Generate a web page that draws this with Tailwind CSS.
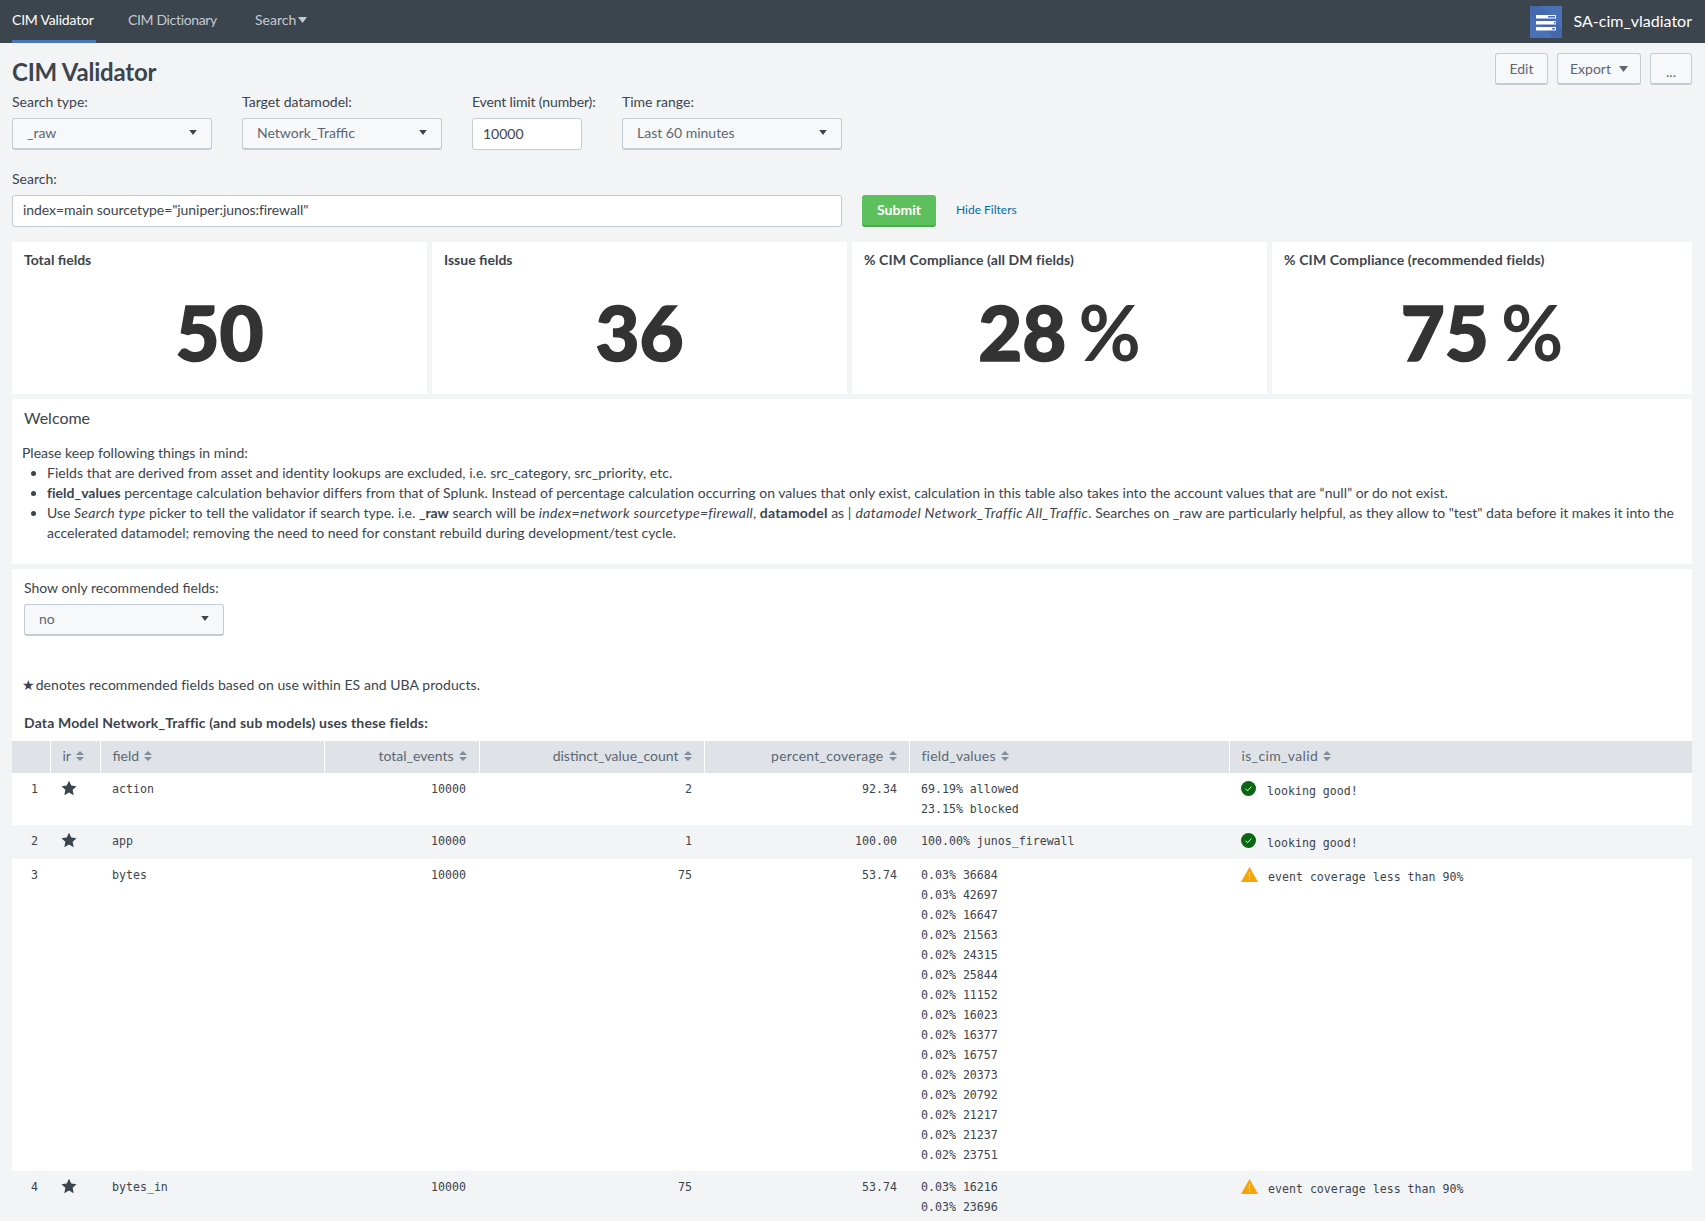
<!DOCTYPE html>
<html lang="en">
<head>
    <meta charset="UTF-8">
    <title>CIM Validator</title>
    <script src="https://cdn.jsdelivr.net/npm/@tailwindcss/browser@4"></script>
</head>
<body class="bg-[#f2f4f5] text-[#3c444d] font-['Lato','Liberation_Sans',sans-serif] text-[14px] leading-5 h-screen overflow-hidden">

<!-- Navigation Bar -->
<nav class="bg-[#3c444d] h-[43px] flex justify-between items-center pl-3 pr-[13px] text-[14px]">
    <ul class="flex h-full items-center whitespace-nowrap">
        <li class="h-full flex items-center border-b-[3px] border-[#4a78c0] text-white w-[84px] tracking-[-0.2px]">CIM Validator</li>
        <li class="ml-[32px] mb-[3px] text-[#c3cbd4] w-[90px] tracking-[-0.35px]">CIM Dictionary</li>
        <li class="ml-[37px] mb-[3px] text-[#c3cbd4] flex items-center gap-[2px]">Search
            <svg class="w-[9px] h-[6px]" viewBox="0 0 9 6"><path d="M0 0h9L4.5 6z" fill="#c3cbd4"/></svg>
        </li>
    </ul>
    <div class="flex items-center gap-3 text-white text-[16px]">
        <svg class="w-[32px] h-[32px]" viewBox="0 0 32 32">
            <rect width="32" height="32" fill="#4a70b8"/>
            <path d="M0 0h10l22 22v10H24L0 8z" fill="#4467ad"/>
            <rect x="6" y="9" width="20" height="3.5" fill="#fff"/>
            <rect x="18" y="10" width="7" height="1.5" fill="#4a70b8"/>
            <rect x="6" y="15" width="20" height="3.5" fill="#fff"/>
            <rect x="24" y="16" width="1.5" height="1.5" fill="#4a70b8"/>
            <rect x="6" y="21" width="20" height="3.5" fill="#fff"/>
            <rect x="22" y="22" width="3" height="1.5" fill="#4a70b8"/>
        </svg>
        <span class="mb-[2px]">SA-cim_vladiator</span>
    </div>
</nav>

<main class="pl-3 pr-[13px]">
    <!-- Title row -->
    <div class="flex justify-between items-start h-[43px]">
        <h1 class="mt-[15px] text-[24px] leading-7 font-bold tracking-[-0.2px]">CIM Validator</h1>
        <div class="flex gap-[9px] mt-[10px] text-[#5c6773]">
            <div class="w-[53px] h-[32px] flex items-center justify-center bg-[#f7f8fa] border border-[#c3cbd4] border-b-2 rounded-[3px]">Edit</div>
            <div class="w-[84px] h-[32px] flex items-center justify-center gap-2 bg-[#f7f8fa] border border-[#c3cbd4] border-b-2 rounded-[3px]">Export
                <svg class="w-[9px] h-[6px]" viewBox="0 0 9 6"><path d="M0 0h9L4.5 6z" fill="#5c6773"/></svg>
            </div>
            <div class="w-[42px] h-[32px] flex items-center justify-center pt-[6px] bg-[#f7f8fa] border border-[#c3cbd4] border-b-2 rounded-[3px]">...</div>
        </div>
    </div>

    <!-- Filters -->
    <div class="flex pt-[6px]">
        <div class="w-[200px] mr-[30px]">
            <label class="block mb-[6px]">Search type:</label>
            <div class="h-[32px] flex justify-between items-center px-[14px] pb-[2px] bg-[#f7f8fa] border border-[#c3cbd4] border-b-2 rounded-[3px] text-[#5c6773]">_raw
                <svg class="w-[8px] h-[5px]" viewBox="0 0 9 6"><path d="M0 0h9L4.5 6z" fill="#3c444d"/></svg>
            </div>
        </div>
        <div class="w-[200px] mr-[30px]">
            <label class="block mb-[6px]">Target datamodel:</label>
            <div class="h-[32px] flex justify-between items-center px-[14px] pb-[2px] bg-[#f7f8fa] border border-[#c3cbd4] border-b-2 rounded-[3px] text-[#5c6773]">Network_Traffic
                <svg class="w-[8px] h-[5px]" viewBox="0 0 9 6"><path d="M0 0h9L4.5 6z" fill="#3c444d"/></svg>
            </div>
        </div>
        <div class="w-[110px] mr-[40px]">
            <label class="block mb-[6px] whitespace-nowrap tracking-[-0.15px]">Event limit (number):</label>
            <input type="text" value="10000" class="w-full h-[32px] px-[10px] pb-[2px] bg-white border border-[#c3cbd4] rounded-[3px] text-[#3c444d]">
        </div>
        <div class="w-[220px]">
            <label class="block mb-[6px]">Time range:</label>
            <div class="h-[32px] flex justify-between items-center px-[14px] pb-[2px] bg-[#f7f8fa] border border-[#c3cbd4] border-b-2 rounded-[3px] text-[#5c6773]">Last 60 minutes
                <svg class="w-[8px] h-[5px]" viewBox="0 0 9 6"><path d="M0 0h9L4.5 6z" fill="#3c444d"/></svg>
            </div>
        </div>
    </div>
    <div class="mt-[19px]">
        <label class="block mb-[6px]">Search:</label>
        <div class="flex items-center">
            <input type="text" value='index=main sourcetype="juniper:junos:firewall"' class="w-[830px] h-[32px] px-[10px] pb-[3px] bg-white border border-[#c3cbd4] rounded-[3px] text-[#3c444d] tracking-[-0.07px]">
            <button class="ml-5 w-[74px] h-[32px] bg-[#5cc05c] border-b-2 border-[#4fa84f] rounded-[3px] text-white font-bold">Submit</button>
            <a href="#" class="ml-5 mb-[2px] text-[12px] text-[#006eaa]">Hide Filters</a>
        </div>
    </div>

    <!-- Single values -->
    <div class="flex gap-[5px] mt-[15px]">
        <div class="bg-white w-[415px] h-[152px] px-3 pt-2">
            <h3 class="font-bold">Total fields</h3>
            <div class="text-center text-[#333] text-[76px] leading-[74px] font-black mt-[25px] [-webkit-text-stroke:1.5px_#333]">50</div>
        </div>
        <div class="bg-white w-[415px] h-[152px] px-3 pt-2">
            <h3 class="font-bold">Issue fields</h3>
            <div class="text-center text-[#333] text-[76px] leading-[74px] font-black mt-[25px] [-webkit-text-stroke:1.5px_#333]">36</div>
        </div>
        <div class="bg-white w-[415px] h-[152px] px-3 pt-2">
            <h3 class="font-bold tracking-[0.1px]">% CIM Compliance (all DM fields)</h3>
            <div class="text-center text-[#333] text-[76px] leading-[74px] font-black mt-[25px] [-webkit-text-stroke:1.5px_#333]">28 <span class="font-bold ml-[-6px] [-webkit-text-stroke:0]">%</span></div>
        </div>
        <div class="bg-white w-[420px] h-[152px] px-3 pt-2">
            <h3 class="font-bold tracking-[0.15px]">% CIM Compliance (recommended fields)</h3>
            <div class="text-center text-[#333] text-[76px] leading-[74px] font-black mt-[25px] [-webkit-text-stroke:1.5px_#333]">75 <span class="font-bold ml-[-6px] [-webkit-text-stroke:0]">%</span></div>
        </div>
    </div>

    <!-- Welcome -->
    <div class="bg-white mt-[5px] h-[165px] pl-[10px] pr-3 pt-[9px]">
        <h2 class="ml-[2px] text-[16px]">Welcome</h2>
        <p class="mt-[15px]">Please keep following things in mind:</p>
        <ul class="list-disc pl-[25px]">
            <li class="tracking-[0.03px]">Fields that are derived from asset and identity lookups are excluded, i.e. src_category, src_priority, etc.</li>
            <li class="tracking-[0.02px]"><b>field_values</b> percentage calculation behavior differs from that of Splunk. Instead of percentage calculation occurring on values that only exist, calculation in this table also takes into the account values that are “null” or do not exist.</li>
            <li>Use <i class="tracking-[0.3px]">Search type</i> picker to tell the validator if search type. i.e. <b>_raw</b> search will be <i class="tracking-[0.3px]">index=network sourcetype=firewall</i>, <b class="tracking-[0.2px]">datamodel</b> as <i class="tracking-[0.38px]">| datamodel Network_Traffic All_Traffic</i>. Searches on _raw are particularly helpful, as they allow to "test" data before it makes it into the accelerated datamodel; removing the need to need for constant rebuild during development/test cycle.</li>
        </ul>
    </div>

    <!-- Table panel -->
    <div class="bg-white mt-[5px]">
        <div class="px-3 pt-[9px]">
            <label class="block mb-[6px]">Show only recommended fields:</label>
            <div class="w-[200px] h-[32px] flex justify-between items-center px-[14px] pb-[2px] bg-[#f7f8fa] border border-[#c3cbd4] border-b-2 rounded-[3px] text-[#5c6773]">no
                <svg class="w-[8px] h-[5px]" viewBox="0 0 9 6"><path d="M0 0h9L4.5 6z" fill="#3c444d"/></svg>
            </div>
        </div>
        <p class="pl-[10px] mt-[39px] tracking-[0.05px]"><span class="mr-[-3px]">★</span> denotes recommended fields based on use within ES and UBA products.</p>
        <h3 class="px-3 mt-[18px] font-bold tracking-[0.16px]">Data Model Network_Traffic (and sub models) uses these fields:</h3>

        <table class="mt-[8px] w-full table-fixed border-collapse font-['DejaVu_Sans_Mono',monospace] text-[11.6px]">
            <colgroup>
                <col class="w-[38px]"><col class="w-[50px]"><col class="w-[224px]"><col class="w-[155px]"><col class="w-[225px]"><col class="w-[205px]"><col class="w-[320px]"><col>
            </colgroup>
            <thead>
                <tr class="bg-[#dfe3e8] h-[32px] font-['Lato',sans-serif] text-[14px] text-[#5c6773]">
                    <th class="border-r border-white"></th>
                    <th class="border-r border-white font-normal text-left pl-3 pb-[2px]"><span class="inline-flex items-center gap-[5px]">ir <svg class="w-[8px] h-[10px]" viewBox="0 0 8 10"><path d="M4 0l4 4H0zM4 10L0 6h8z" fill="#818d99"/></svg></span></th>
                    <th class="border-r border-white font-normal text-left pl-3 pb-[2px]"><span class="inline-flex items-center gap-[5px]">field <svg class="w-[8px] h-[10px]" viewBox="0 0 8 10"><path d="M4 0l4 4H0zM4 10L0 6h8z" fill="#818d99"/></svg></span></th>
                    <th class="border-r border-white font-normal text-right pr-3 pb-[2px]"><span class="inline-flex items-center gap-[5px]">total_events <svg class="w-[8px] h-[10px]" viewBox="0 0 8 10"><path d="M4 0l4 4H0zM4 10L0 6h8z" fill="#818d99"/></svg></span></th>
                    <th class="border-r border-white font-normal text-right pr-3 pb-[2px]"><span class="inline-flex items-center gap-[5px]">distinct_value_count <svg class="w-[8px] h-[10px]" viewBox="0 0 8 10"><path d="M4 0l4 4H0zM4 10L0 6h8z" fill="#818d99"/></svg></span></th>
                    <th class="border-r border-white font-normal text-right pr-3 pb-[2px]"><span class="inline-flex items-center gap-[5px] tracking-[0.25px]">percent_coverage <svg class="w-[8px] h-[10px]" viewBox="0 0 8 10"><path d="M4 0l4 4H0zM4 10L0 6h8z" fill="#818d99"/></svg></span></th>
                    <th class="border-r border-white font-normal text-left pl-3 pb-[2px]"><span class="inline-flex items-center gap-[5px] tracking-[0.2px]">field_values <svg class="w-[8px] h-[10px]" viewBox="0 0 8 10"><path d="M4 0l4 4H0zM4 10L0 6h8z" fill="#818d99"/></svg></span></th>
                    <th class="font-normal text-left pl-3 pb-[2px]"><span class="inline-flex items-center gap-[5px] tracking-[0.35px]">is_cim_valid <svg class="w-[8px] h-[10px]" viewBox="0 0 8 10"><path d="M4 0l4 4H0zM4 10L0 6h8z" fill="#818d99"/></svg></span></th>
                </tr>
            </thead>
            <tbody class="align-top">
                <tr>
                    <td class="pt-[6px] pb-[8px] text-right pr-3">1</td>
                    <td class="pt-[7px] pl-[11px]"><svg class="w-[16px] h-[16px]" viewBox="0 0 24 24"><path d="M12 1l3.4 7.3 7.9 1-5.8 5.5 1.5 7.9L12 18.8l-7 3.9 1.5-7.9L.7 9.3l7.9-1z" fill="#3c444d"/></svg></td>
                    <td class="pt-[6px] pl-3">action</td>
                    <td class="pt-[6px] pr-[13px] text-right">10000</td>
                    <td class="pt-[6px] pr-3 text-right">2</td>
                    <td class="pt-[6px] pr-3 text-right">92.34</td>
                    <td class="pt-[6px] pb-[6px] pl-3">69.19% allowed<br>23.15% blocked</td>
                    <td class="pt-[8px] pl-3"><div class="flex items-start gap-[11px]">
                        <svg class="w-[15px] h-[15px]" viewBox="0 0 16 16"><circle cx="8" cy="8" r="8" fill="#0a6612"/><path d="M4.8 8.2l2.2 2.2 4-4.4" fill="none" stroke="#fff" stroke-width="1"/></svg>
                        <span>looking good!</span></div></td>
                </tr>
                <tr class="bg-[#f2f4f5]">
                    <td class="pt-[6px] pb-[8px] text-right pr-3">2</td>
                    <td class="pt-[7px] pl-[11px]"><svg class="w-[16px] h-[16px]" viewBox="0 0 24 24"><path d="M12 1l3.4 7.3 7.9 1-5.8 5.5 1.5 7.9L12 18.8l-7 3.9 1.5-7.9L.7 9.3l7.9-1z" fill="#3c444d"/></svg></td>
                    <td class="pt-[6px] pl-3">app</td>
                    <td class="pt-[6px] pr-[13px] text-right">10000</td>
                    <td class="pt-[6px] pr-3 text-right">1</td>
                    <td class="pt-[6px] pr-3 text-right">100.00</td>
                    <td class="pt-[6px] pl-3">100.00% junos_firewall</td>
                    <td class="pt-[8px] pl-3"><div class="flex items-start gap-[11px]">
                        <svg class="w-[15px] h-[15px]" viewBox="0 0 16 16"><circle cx="8" cy="8" r="8" fill="#0a6612"/><path d="M4.8 8.2l2.2 2.2 4-4.4" fill="none" stroke="#fff" stroke-width="1"/></svg>
                        <span>looking good!</span></div></td>
                </tr>
                <tr>
                    <td class="pt-[6px] pb-[8px] text-right pr-3">3</td>
                    <td></td>
                    <td class="pt-[6px] pl-3">bytes</td>
                    <td class="pt-[6px] pr-[13px] text-right">10000</td>
                    <td class="pt-[6px] pr-3 text-right">75</td>
                    <td class="pt-[6px] pr-3 text-right">53.74</td>
                    <td class="pt-[6px] pb-[6px] pl-3">0.03% 36684<br>0.03% 42697<br>0.02% 16647<br>0.02% 21563<br>0.02% 24315<br>0.02% 25844<br>0.02% 11152<br>0.02% 16023<br>0.02% 16377<br>0.02% 16757<br>0.02% 20373<br>0.02% 20792<br>0.02% 21217<br>0.02% 21237<br>0.02% 23751</td>
                    <td class="pt-[8px] pl-3"><div class="flex items-start gap-[10px]">
                        <svg class="w-[17px] h-[15px]" viewBox="0 0 17 15"><path d="M8.5 0L17 15H0z" fill="#f7a30a"/><path d="M8.5 5v5M8.5 11v2" stroke="#fbd27a" stroke-width="1.2"/></svg>
                        <span>event coverage less than 90%</span></div></td>
                </tr>
                <tr class="bg-[#f2f4f5]">
                    <td class="pt-[6px] pb-[8px] text-right pr-3">4</td>
                    <td class="pt-[7px] pl-[11px]"><svg class="w-[16px] h-[16px]" viewBox="0 0 24 24"><path d="M12 1l3.4 7.3 7.9 1-5.8 5.5 1.5 7.9L12 18.8l-7 3.9 1.5-7.9L.7 9.3l7.9-1z" fill="#3c444d"/></svg></td>
                    <td class="pt-[6px] pl-3">bytes_in</td>
                    <td class="pt-[6px] pr-[13px] text-right">10000</td>
                    <td class="pt-[6px] pr-3 text-right">75</td>
                    <td class="pt-[6px] pr-3 text-right">53.74</td>
                    <td class="pt-[6px] pl-3">0.03% 16216<br>0.03% 23696</td>
                    <td class="pt-[8px] pl-3"><div class="flex items-start gap-[10px]">
                        <svg class="w-[17px] h-[15px]" viewBox="0 0 17 15"><path d="M8.5 0L17 15H0z" fill="#f7a30a"/><path d="M8.5 5v5M8.5 11v2" stroke="#fbd27a" stroke-width="1.2"/></svg>
                        <span>event coverage less than 90%</span></div></td>
                </tr>
            </tbody>
        </table>
    </div>
</main>

</body>
</html>
